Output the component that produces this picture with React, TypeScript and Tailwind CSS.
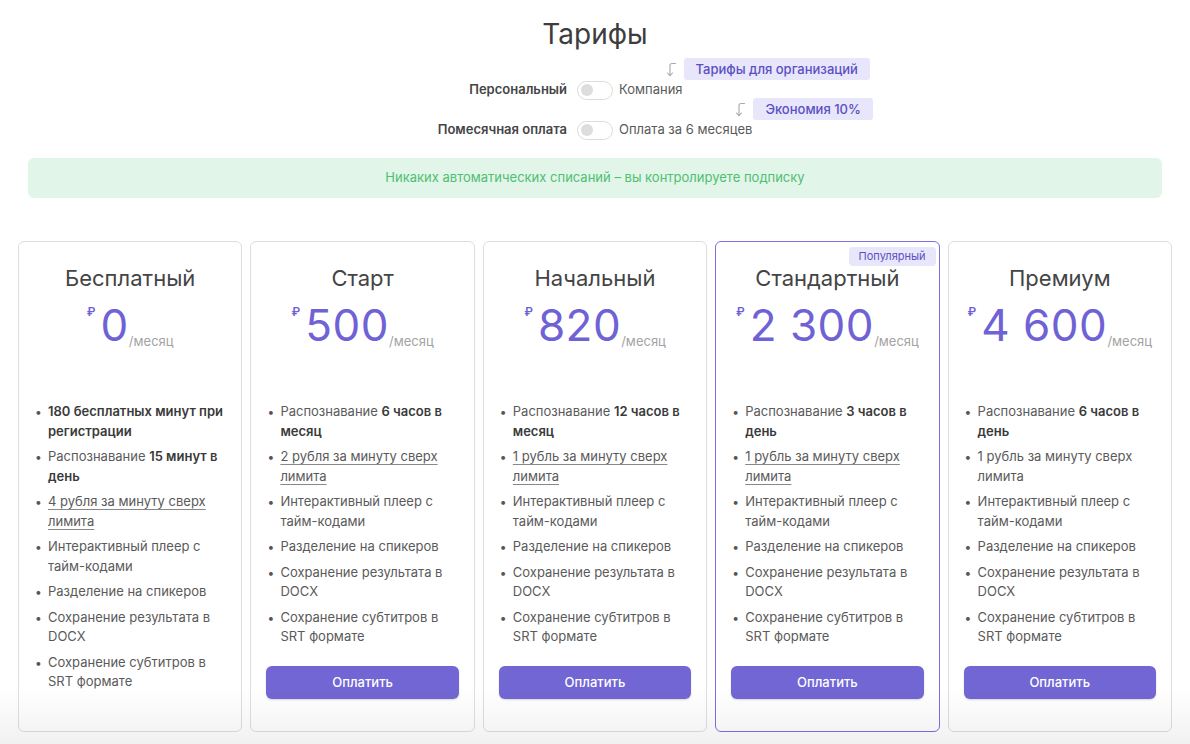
import React from "react";

type Feat = { parts: { t: string; b?: boolean; u?: boolean }[] };

const common: Feat[] = [
  { parts: [{ t: "Интерактивный плеер с тайм-кодами" }] },
  { parts: [{ t: "Разделение на спикеров" }] },
  { parts: [{ t: "Сохранение результата в DOCX" }] },
  { parts: [{ t: "Сохранение субтитров в SRT формате" }] },
];

const plans: {
  name: string;
  price: string;
  features: Feat[];
  button: boolean;
  popular?: boolean;
}[] = [
  {
    name: "Бесплатный",
    price: "0",
    button: false,
    features: [
      { parts: [{ t: "180 бесплатных минут при регистрации", b: true }] },
      { parts: [{ t: "Распознавание " }, { t: "15 минут в день", b: true }] },
      { parts: [{ t: "4 рубля за минуту сверх лимита", u: true }] },
      ...common,
    ],
  },
  {
    name: "Старт",
    price: "500",
    button: true,
    features: [
      { parts: [{ t: "Распознавание " }, { t: "6 часов в месяц", b: true }] },
      { parts: [{ t: "2 рубля за минуту сверх лимита", u: true }] },
      ...common,
    ],
  },
  {
    name: "Начальный",
    price: "820",
    button: true,
    features: [
      { parts: [{ t: "Распознавание " }, { t: "12 часов в месяц", b: true }] },
      { parts: [{ t: "1 рубль за минуту сверх лимита", u: true }] },
      ...common,
    ],
  },
  {
    name: "Стандартный",
    price: "2 300",
    button: true,
    popular: true,
    features: [
      { parts: [{ t: "Распознавание " }, { t: "3 часов в день", b: true }] },
      { parts: [{ t: "1 рубль за минуту сверх лимита", u: true }] },
      ...common,
    ],
  },
  {
    name: "Премиум",
    price: "4 600",
    button: true,
    features: [
      { parts: [{ t: "Распознавание " }, { t: "6 часов в день", b: true }] },
      { parts: [{ t: "1 рубль за минуту сверх лимита" }] },
      ...common,
    ],
  },
];

function HookArrow() {
  return (
    <svg width="12" height="15" viewBox="0 0 12 15" fill="none" stroke="#a8a8a8" strokeWidth="1.1" strokeLinecap="round" strokeLinejoin="round">
      <path d="M10.5 1.5 H7 Q5 1.5 5 3.5 V13.5" />
      <path d="M2.5 11 L5 13.7 L7.5 11" />
    </svg>
  );
}

function Toggle() {
  return (
    <div className="w-[36px] h-[19px] rounded-full border border-[#dcdcdc] bg-white flex items-center px-[3px]">
      <div className="w-[12px] h-[12px] rounded-full bg-[#dddde0]" />
    </div>
  );
}

function ToggleRow({ left, right, badge }: { left: string; right: string; badge: string }) {
  return (
    <div className="grid grid-cols-[1fr_36px_1fr] items-center h-[20px]">
      <div className="text-right pr-[10px] text-[13px] font-semibold text-[#454545]">{left}</div>
      <Toggle />
      <div className="pl-[6px] text-[13px] text-[#5a5a5a]">
        <span className="relative">
          {right}
          <span className="absolute left-[calc(100%-18px)] bottom-[calc(100%+1px)] flex items-center gap-[7px] whitespace-nowrap">
            <HookArrow />
            <span className="h-[22px] px-[12px] flex items-center rounded-[3px] bg-[#e8e6fb] text-[#5b50c2] text-[13px] font-medium">
              {badge}
            </span>
          </span>
        </span>
      </div>
    </div>
  );
}

export default function App() {
  return (
    <div
      className="relative w-[1190px] h-[744px] overflow-hidden bg-white"
      style={{ fontFamily: "Inter, 'Noto Sans', sans-serif" }}
    >
      <div className="pt-[16px] flex flex-col">
        <h1 className="text-center text-[28px] leading-[36px] text-[#3d3d3d] font-normal">Тарифы</h1>
        <div className="mt-[28px] flex flex-col gap-[20px]">
          <ToggleRow left="Персональный" right="Компания" badge="Тарифы для организаций" />
          <ToggleRow left="Помесячная оплата" right="Оплата за 6 месяцев" badge="Экономия 10%" />
        </div>
        <div className="mx-[28px] mt-[18px] h-[40px] rounded-[6px] bg-[#e1f5e8] flex items-center justify-center text-[13px] text-[#4fbf72]">
          Никаких автоматических списаний – вы контролируете подписку
        </div>
        <div className="mx-[18px] mt-[43px] grid grid-cols-5 gap-[8px]">
          {plans.map((p) => (
            <div
              key={p.name}
              className={
                "relative h-[491px] rounded-[6px] border bg-white flex flex-col px-[15px] pt-[22px] pb-[32px] " +
                (p.popular ? "border-[#7d70e0]" : "border-[#dedede]")
              }
            >
              {p.popular && (
                <div className="absolute top-[5px] right-[3px] h-[19px] px-[10px] rounded-[4px] bg-[#e8e6fb] text-[#5b50c2] text-[11px] flex items-center">
                  Популярный
                </div>
              )}
              <div className="text-center text-[22px] leading-[28px] text-[#444]">{p.name}</div>
              <div className="mt-[11px] flex justify-center items-end">
                <span className="self-start mt-[3px] text-[12px] leading-[12px] text-[#6f62d5] font-semibold mr-[5px]">₽</span>
                <span className="text-[44px] leading-[44px] text-[#6f62d5] font-normal tracking-[0.5px]">{p.price}</span>
                <span className="text-[13px] leading-[16px] text-[#a3a3a3] mb-[-2px]">/месяц</span>
              </div>
              <ul className="mt-[55px] flex flex-col gap-[6px] text-[13px] leading-[19.5px] text-[#5a5a5a]">
                {p.features.map((f, i) => (
                  <li key={i} className="flex">
                    <span className="w-[13px] ml-[1px] shrink-0 text-[#555] text-[12px]">•</span>
                    <span>
                      {f.parts.map((pt, j) =>
                        pt.b ? (
                          <span key={j} className="font-semibold text-[#3a3a3a]">{pt.t}</span>
                        ) : pt.u ? (
                          <span key={j} className="underline underline-offset-[3px] decoration-[#888]">{pt.t}</span>
                        ) : (
                          <span key={j}>{pt.t}</span>
                        )
                      )}
                    </span>
                  </li>
                ))}
              </ul>
              {p.button && (
                <button className="mt-auto h-[33px] w-full rounded-[6px] bg-[#7166d3] text-white text-[13px] font-medium shadow-[0_1px_2px_rgba(0,0,0,0.15)]">
                  Оплатить
                </button>
              )}
            </div>
          ))}
        </div>
      </div>
      <div className="pointer-events-none absolute left-0 right-0 bottom-0 h-[56px] bg-gradient-to-b from-[rgba(0,0,0,0)] to-[rgba(0,0,0,0.055)]" />
    </div>
  );
}
